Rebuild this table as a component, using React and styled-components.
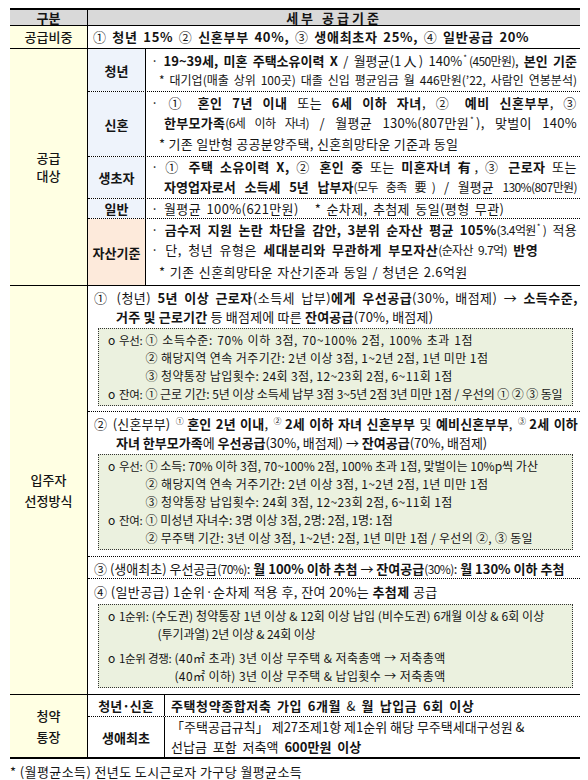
import React from 'react';
import styled, { createGlobalStyle } from 'styled-components';

const GlobalStyle = createGlobalStyle`
  html, body { margin: 0; padding: 0; background: #ffffff; }
  body {
    font-family: "Noto Sans CJK KR", "Noto Sans", sans-serif;
    color: #141414;
  }
  * { box-sizing: border-box; }
`;

const Page = styled.div`
  width: 588px;
  padding: 8px 8px 0 10px;
`;

const Table = styled.div`
  border-top: 2px solid #000;
  border-bottom: 2px solid #000;
`;

const Row = styled.div`
  display: grid;
  grid-template-columns: 78px 1fr;
  border-bottom: ${(p) => (p.$last ? 'none' : '1px solid #000')};
`;

const HeadCell = styled.div`
  background: #d9d9d9;
  height: 15px;
  font-size: 13px;
  font-weight: 700;
  line-height: 15px;
  text-align: center;
  letter-spacing: ${(p) => p.$spread || 'normal'};
  border-right: ${(p) => (p.$divider ? '1px solid #000' : 'none')};
`;

const Label = styled.div`
  background: #ffffe3;
  border-right: 1px solid #000;
  display: flex;
  flex-direction: column;
  align-items: center;
  justify-content: center;
  font-size: 13px;
  font-weight: 500;
  line-height: ${(p) => p.$lh || 18}px;
`;

const Content = styled.div`
  padding: ${(p) => p.$pad || '0 3px 0 5px'};
  font-size: 13px;
  line-height: ${(p) => p.$lh || 20}px;
  letter-spacing: ${(p) => p.$ls || 'normal'};
  word-spacing: ${(p) => p.$ws || 'normal'};
  white-space: nowrap;
`;

const SubRow = styled.div`
  display: grid;
  grid-template-columns: ${(p) => p.$w || '58px'} 1fr;
  border-bottom: ${(p) => (p.$last ? 'none' : '1px dotted #000')};
`;

const SubLabel = styled.div`
  background: ${(p) =>
    p.$tone === 'peach' ? '#fdeadb' : p.$tone === 'blue' ? '#eef3fb' : '#ffffff'};
  border-right: 1px solid #000;
  display: flex;
  align-items: center;
  justify-content: center;
  font-size: 13px;
  font-weight: 700;
`;

const Line = styled.div`
  padding-left: ${(p) => p.$indent || 0}px;
  font-size: ${(p) => p.$size || 13}px;
  line-height: ${(p) => p.$lh || 20}px;
  letter-spacing: ${(p) => p.$ls || 'normal'};
  word-spacing: ${(p) => p.$ws || 'normal'};
  white-space: ${(p) => (p.$fill ? 'normal' : 'nowrap')};
  text-align: ${(p) => (p.$fill ? 'justify' : 'left')};
  text-align-last: ${(p) => (p.$fill ? 'justify' : 'auto')};
`;

const Note = styled(Line)`
  padding-left: 8px;
`;

const B = styled.b`
  font-weight: 700;
`;

const Thin = styled.span`
  font-size: 12px;
  letter-spacing: -0.6px;
`;

const Sup = styled.sup`
  font-size: 8px;
  line-height: 8px;
  vertical-align: 5px;
  margin: 0 2px 0 1px;
`;

const Item = styled.div`
  padding: ${(p) => p.$pt || 2}px 2px 0 6px;
  border-bottom: ${(p) => (p.$last ? 'none' : '1px dotted #000')};
`;

const ItemLine = styled.div`
  font-size: 13px;
  line-height: ${(p) => p.$lh || 19}px;
  padding-left: ${(p) => p.$indent || 0}px;
  letter-spacing: ${(p) => p.$ls || 'normal'};
  white-space: ${(p) => (p.$fill ? 'normal' : 'nowrap')};
  text-align: ${(p) => (p.$fill ? 'justify' : 'left')};
  text-align-last: ${(p) => (p.$fill ? 'justify' : 'auto')};
`;

const Box = styled.div`
  margin: ${(p) => p.$mt ?? 2}px 5px ${(p) => p.$mb || 6}px 4px;
  background: #ebf1df;
  border: 1px dotted #333;
  padding: 2px 4px 2px 9px;
`;

const Entry = styled.div`
  display: grid;
  grid-template-columns: 8px auto 1fr;
  column-gap: 3px;
  font-size: 12px;
  line-height: 18px;
  white-space: nowrap;
  margin-top: ${(p) => p.$mt || 0}px;
`;

const EntryLabel = styled.span`
  font-size: 11.5px;
  letter-spacing: -0.3px;
`;

const EntryText = styled.div`
  padding-left: ${(p) => p.$indent || 0}px;
  letter-spacing: ${(p) => p.$ls || 0}px;
  word-spacing: ${(p) => p.$ws || 0}px;
`;

const Footnote = styled.div`
  padding: 4px 0 0 0;
  font-size: 13px;
  line-height: 18px;
  letter-spacing: 0.4px;
`;

const BoxEntry = ({ label, lines, mt }) => (
  <Entry $mt={mt}>
    <span>o</span>
    <EntryLabel>{label}</EntryLabel>
    <div>
      {lines.map((l, i) => (
        <EntryText key={i} $indent={l.indent} $ls={l.ls} $ws={l.ws}>
          {l.text}
        </EntryText>
      ))}
    </div>
  </Entry>
);

export default function App() {
  return (
    <Page>
      <GlobalStyle />
      <Table>
        <Row>
          <HeadCell $divider>구분</HeadCell>
          <HeadCell $spread="3px">세부 공급기준</HeadCell>
        </Row>

        <Row>
          <Label $lh={22}>공급비중</Label>
          <Content $lh={22} $pad="0 4px 0 5px" $ls="0.7px" $ws="2px">
            ① <B>청년 15%</B> ② <B>신혼부부 40%,</B> ③ <B>생애최초자 25%,</B> ④{' '}
            <B>일반공급 20%</B>
          </Content>
        </Row>

        <Row>
          <Label>
            <span>공급</span>
            <span>대상</span>
          </Label>
          <div>
            <SubRow>
              <SubLabel $tone="blue">청년</SubLabel>
              <Content $pad="2px 3px 2px 5px">
                <Line $lh={19} $fill>
                  · <B>19~39세, 미혼 주택소유이력 X</B> / 월평균(1人) 140%
                  <Sup>*</Sup>
                  <Thin>(450만원)</Thin>, <B>본인 기준</B>
                </Line>
                <Note $lh={19} $size={12} $fill>
                  * 대기업(매출 상위 100곳) 대졸 신입 평균임금 월 446만원(’22, 사람인 연봉분석)
                </Note>
              </Content>
            </SubRow>

            <SubRow>
              <SubLabel $tone="blue">신혼</SubLabel>
              <Content $pad="1px 3px 1px 5px">
                <Line $fill $ls="0.6px">
                  · ① <B>혼인 7년 이내</B> 또는 <B>6세 이하 자녀</B>, ② <B>예비 신혼부부</B>, ③
                </Line>
                <Line $indent={13} $fill $ls="0.3px">
                  <B>한부모가족</B>
                  <Thin>(6세 이하 자녀)</Thin> / 월평균 130%(807만원<Sup>*</Sup>), 맞벌이 140%
                </Line>
                <Note $lh={22} $ls="0.3px">
                  * 기존 일반형 공공분양주택, 신혼희망타운 기준과 동일
                </Note>
              </Content>
            </SubRow>

            <SubRow>
              <SubLabel $tone="blue">생초자</SubLabel>
              <Content $pad="0 3px 1px 5px">
                <Line $fill $ls="0.5px">
                  · ① <B>주택 소유이력 X,</B> ② <B>혼인 중</B> 또는 <B>미혼자녀 有</B>, ③{' '}
                  <B>근로자</B> 또는
                </Line>
                <Line $indent={13} $fill>
                  <B>자영업자로서 소득세 5년 납부자</B>
                  <Thin>(모두 충족 要)</Thin> / 월평균 <Thin>130%(807만원)</Thin>
                </Line>
              </Content>
            </SubRow>

            <SubRow>
              <SubLabel $tone="blue">일반</SubLabel>
              <Content $lh={19}>
                <Line $lh={19} $ls="0.4px" $ws="2px">
                  · 월평균 100%(621만원)&nbsp;&nbsp;&nbsp;* 순차제, 추첨제 동일(평형 무관)
                </Line>
              </Content>
            </SubRow>

            <SubRow $last>
              <SubLabel $tone="peach">자산기준</SubLabel>
              <Content $pad="1px 3px 2px 5px">
                <Line $fill $ls="0.3px">
                  · <B>금수저 지원 논란 차단을 감안, 3분위 순자산 평균 105%</B>
                  <Thin>(3.4억원</Thin>
                  <Sup>*</Sup>
                  <Thin>)</Thin> 적용
                </Line>
                <Line $ls="0.5px" $ws="3px">
                  · 단, 청년 유형은 <B>세대분리와 무관하게 부모자산</B>
                  <Thin>(순자산 9.7억)</Thin> <B>반영</B>
                </Line>
                <Note $lh={23} $ls="0.4px" $ws="1px">
                  * 기존 신혼희망타운 자산기준과 동일 / 청년은 2.6억원
                </Note>
              </Content>
            </SubRow>
          </div>
        </Row>

        <Row>
          <Label $lh={21}>
            <span>입주자</span>
            <span>선정방식</span>
          </Label>
          <div>
            <Item>
              <ItemLine $fill $ls="0.5px">
                ① (청년) <B>5년 이상 근로자</B>(소득세 납부)<B>에게 우선공급</B>(30%, 배점제) →{' '}
                <B>소득수준,</B>
              </ItemLine>
              <ItemLine $indent={22} $ls="0.2px">
                <B>거주 및 근로기간</B> 등 배점제에 따른 <B>잔여공급</B>(70%, 배점제)
              </ItemLine>
              <Box $mb={5}>
                <BoxEntry
                  label="우선:"
                  lines={[
                    { text: '① 소득수준: 70% 이하 3점, 70~100% 2점, 100% 초과 1점', ls: 0.6, ws: 1 },
                    { text: '② 해당지역 연속 거주기간: 2년 이상 3점, 1~2년 2점, 1년 미만 1점', ls: 0.4 },
                    { text: '③ 청약통장 납입횟수: 24회 3점, 12~23회 2점, 6~11회 1점', ls: 0.4 },
                  ]}
                />
                <BoxEntry
                  label="잔여:"
                  lines={[
                    {
                      text: '① 근로 기간: 5년 이상 소득세 납부 3점 3~5년 2점 3년 미만 1점 / 우선의 ① ② ③ 동일',
                      ls: -0.1,
                    },
                  ]}
                />
              </Box>
            </Item>

            <Item>
              <ItemLine $fill $ls="0.2px">
                ② (신혼부부) <Sup>①</Sup>
                <B>혼인 2년 이내</B>, <Sup>②</Sup>
                <B>2세 이하 자녀 신혼부부</B> 및 <B>예비신혼부부</B>, <Sup>③</Sup>
                <B>2세 이하</B>
              </ItemLine>
              <ItemLine $indent={22}>
                <B>자녀 한부모가족</B>에 <B>우선공급</B>(30%, 배점제) → <B>잔여공급</B>(70%, 배점제)
              </ItemLine>
              <Box $mb={6}>
                <BoxEntry
                  label="우선:"
                  lines={[
                    { text: '① 소득: 70% 이하 3점, 70~100% 2점, 100% 초과 1점, 맞벌이는 10%p씩 가산' },
                    { text: '② 해당지역 연속 거주기간: 2년 이상 3점, 1~2년 2점, 1년 미만 1점', ls: 0.4 },
                    { text: '③ 청약통장 납입횟수: 24회 3점, 12~23회 2점, 6~11회 1점', ls: 0.4 },
                  ]}
                />
                <BoxEntry
                  label="잔여:"
                  lines={[
                    { text: '① 미성년 자녀수: 3명 이상 3점, 2명: 2점, 1명: 1점' },
                    { text: '② 무주택 기간: 3년 이상 3점, 1~2년: 2점, 1년 미만 1점 / 우선의 ②, ③ 동일', ls: 0.3 },
                  ]}
                />
              </Box>
            </Item>

            <Item>
              <ItemLine $lh={19}>
                ③ (생애최초) 우선공급<Thin>(70%)</Thin>: <B>월 100% 이하 추첨</B> → <B>잔여공급</B>
                <Thin>(30%)</Thin>: <B>월 130% 이하 추첨</B>
              </ItemLine>
            </Item>

            <Item $last $pt={3}>
              <ItemLine $lh={19} $ls="0.4px">
                ④ (일반공급) 1순위·순차제 적용 후, 잔여 20%는 <B>추첨제</B> 공급
              </ItemLine>
              <Box $mt={3} $mb={6}>
                <BoxEntry
                  label="1순위:"
                  lines={[
                    { text: '(수도권) 청약통장 1년 이상 & 12회 이상 납입 (비수도권) 6개월 이상 & 6회 이상', ls: 0.1 },
                    { text: '(투기과열) 2년 이상 & 24회 이상', indent: 6, ls: -0.1 },
                  ]}
                />
                <BoxEntry
                  mt={6}
                  label="1순위 경쟁:"
                  lines={[
                    { text: '(40㎡ 초과) 3년 이상 무주택 & 저축총액 → 저축총액', ls: 0.4 },
                    { text: '(40㎡ 이하) 3년 이상 무주택 & 납입횟수 → 저축총액', ls: 0.4 },
                  ]}
                />
              </Box>
            </Item>
          </div>
        </Row>

        <Row $last>
          <Label $lh={21}>
            <span>청약</span>
            <span>통장</span>
          </Label>
          <div>
            <SubRow $w="77px">
              <SubLabel>청년·신혼</SubLabel>
              <Content $lh={21} $pad="0 4px 0 6px" $ls="0.6px" $ws="2px">
                <B>주택청약종합저축 가입 6개월</B> & <B>월 납입금 6회 이상</B>
              </Content>
            </SubRow>
            <SubRow $w="77px" $last>
              <SubLabel>생애최초</SubLabel>
              <Content $pad="0 4px 0 6px" $ls="0.6px" $ws="1px">
                <Line>「주택공급규칙」 제27조제1항 제1순위 해당 무주택세대구성원 &</Line>
                <Line $ws="3px">
                  선납금 포함 저축액 <B>600만원 이상</B>
                </Line>
              </Content>
            </SubRow>
          </div>
        </Row>
      </Table>
      <Footnote>* (월평균소득) 전년도 도시근로자 가구당 월평균소득</Footnote>
    </Page>
  );
}
